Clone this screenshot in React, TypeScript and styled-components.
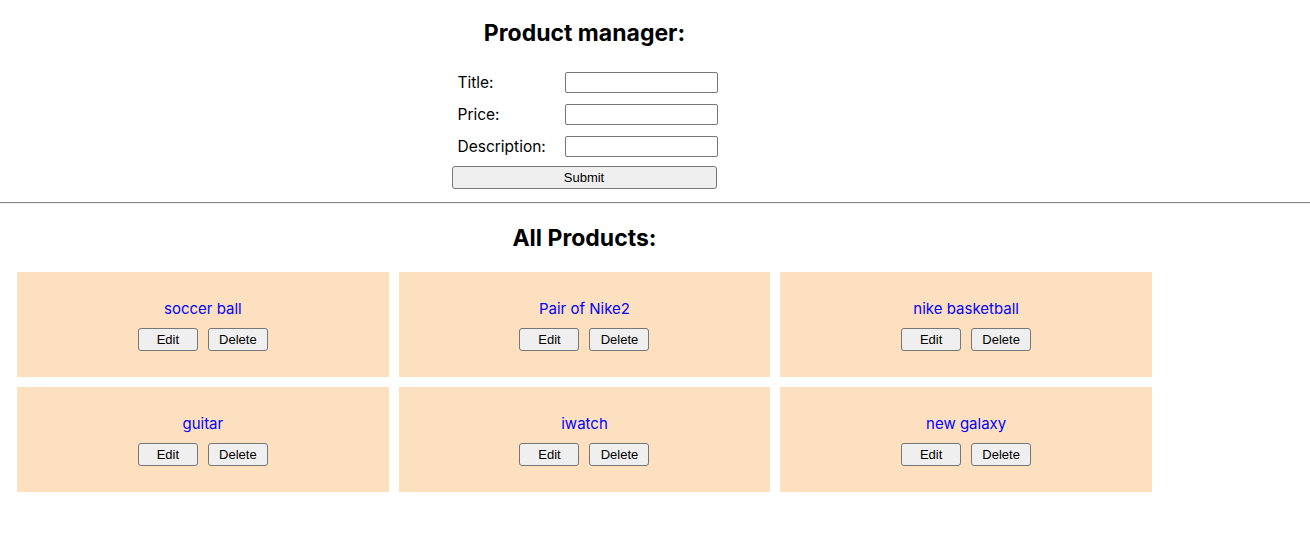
import React from "react";
import styled, { createGlobalStyle } from "styled-components";

type Product = {
  id: number;
  title: string;
};

const products: Product[] = [
  { id: 1, title: "soccer ball" },
  { id: 2, title: "Pair of Nike2" },
  { id: 3, title: "nike basketball" },
  { id: 4, title: "guitar" },
  { id: 5, title: "iwatch" },
  { id: 6, title: "new galaxy" },
];

const GlobalStyle = createGlobalStyle`
  body {
    margin: 0;
    background: #ffffff;
    font-family: Inter, "Noto Sans", sans-serif;
    color: #000000;
  }
`;

const Main = styled.div`
  width: 1169px;
  box-sizing: border-box;
`;

const Heading = styled.h2`
  margin: 19px 0 0;
  font-size: 23px;
  font-weight: 700;
  text-align: center;
`;

const Form = styled.form`
  width: 266px;
  margin: 25px auto 0;
  display: grid;
  grid-template-columns: 113px 1fr;
  row-gap: 11px;
  align-items: center;
`;

const Label = styled.label`
  padding-left: 6px;
  font-size: 15.5px;
`;

const Input = styled.input`
  width: 153px;
  height: 21px;
  box-sizing: border-box;
  border: 1px solid #767676;
  border-radius: 2px;
  padding: 1px 2px;
`;

const NativeButton = styled.button`
  font-family: "Liberation Sans", Arial, sans-serif;
  font-size: 13px;
  color: #000000;
  background: #efefef;
  border: 1px solid #767676;
  border-radius: 3px;
  padding: 0;
  box-sizing: border-box;
`;

const SubmitButton = styled(NativeButton)`
  grid-column: 1 / span 2;
  width: 265px;
  height: 23px;
  margin-top: -2px;
`;

const Divider = styled.hr`
  margin: 13px 0 0;
  border: 0;
  border-top: 1px solid #8a8a8a;
  border-bottom: 1px solid #e8e8e8;
`;

const ProductsHeading = styled(Heading)`
  margin-top: 20px;
`;

const Grid = styled.div`
  margin-top: 20px;
  padding: 0 17px;
  display: grid;
  grid-template-columns: repeat(3, 1fr);
  gap: 10px;
`;

const Card = styled.div`
  height: 105px;
  background: #fde0c0;
  display: flex;
  flex-direction: column;
  align-items: center;
  justify-content: center;
  gap: 10px;
`;

const CardTitle = styled.div`
  font-size: 15px;
  color: #0000ff;
`;

const Actions = styled.div`
  display: flex;
  gap: 10px;
`;

const CardButton = styled(NativeButton)`
  width: 60px;
  height: 23px;
`;

const App = () => {
  return (
    <>
      <GlobalStyle />
      <Main>
        <Heading>Product manager:</Heading>
        <Form onSubmit={(e) => e.preventDefault()}>
          <Label>Title:</Label>
          <Input type="text" />
          <Label>Price:</Label>
          <Input type="text" />
          <Label>Description:</Label>
          <Input type="text" />
          <SubmitButton type="submit">Submit</SubmitButton>
        </Form>
      </Main>
      <Divider />
      <Main>
        <ProductsHeading>All Products:</ProductsHeading>
        <Grid>
          {products.map((product) => (
            <Card key={product.id}>
              <CardTitle>{product.title}</CardTitle>
              <Actions>
                <CardButton>Edit</CardButton>
                <CardButton>Delete</CardButton>
              </Actions>
            </Card>
          ))}
        </Grid>
      </Main>
    </>
  );
};

export default App;
